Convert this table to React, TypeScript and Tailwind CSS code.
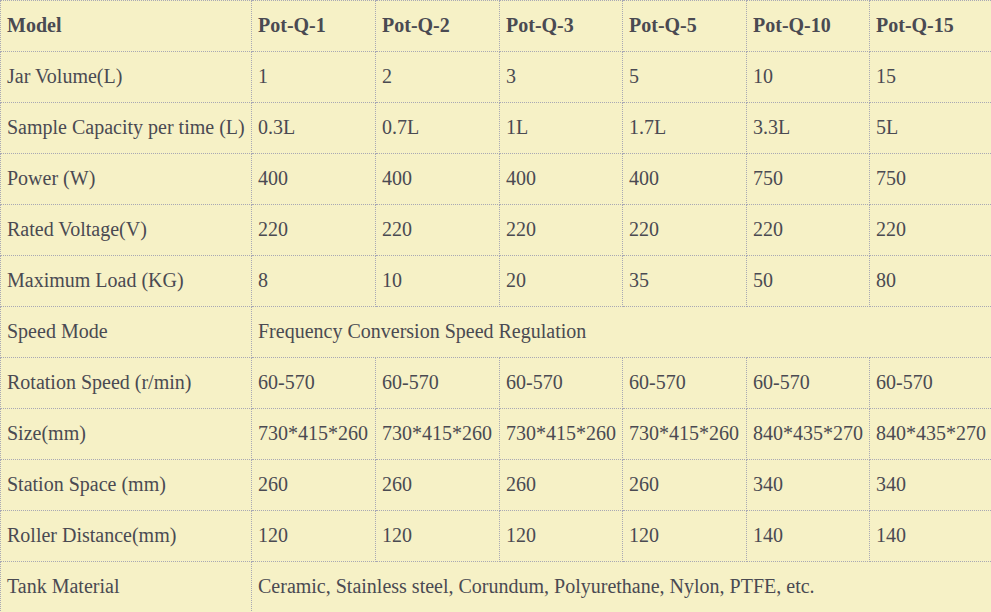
const models = ["Pot-Q-1", "Pot-Q-2", "Pot-Q-3", "Pot-Q-5", "Pot-Q-10", "Pot-Q-15"];

const rows: { label: string; values: string[]; span?: boolean }[] = [
  { label: "Jar Volume(L)", values: ["1", "2", "3", "5", "10", "15"] },
  { label: "Sample Capacity per time (L)", values: ["0.3L", "0.7L", "1L", "1.7L", "3.3L", "5L"] },
  { label: "Power (W)", values: ["400", "400", "400", "400", "750", "750"] },
  { label: "Rated Voltage(V)", values: ["220", "220", "220", "220", "220", "220"] },
  { label: "Maximum Load (KG)", values: ["8", "10", "20", "35", "50", "80"] },
  { label: "Speed Mode", values: ["Frequency Conversion Speed Regulation"], span: true },
  { label: "Rotation Speed (r/min)", values: ["60-570", "60-570", "60-570", "60-570", "60-570", "60-570"] },
  { label: "Size(mm)", values: ["730*415*260", "730*415*260", "730*415*260", "730*415*260", "840*435*270", "840*435*270"] },
  { label: "Station Space (mm)", values: ["260", "260", "260", "260", "340", "340"] },
  { label: "Roller Distance(mm)", values: ["120", "120", "120", "120", "140", "140"] },
  { label: "Tank Material", values: ["Ceramic, Stainless steel, Corundum, Polyurethane, Nylon, PTFE, etc."], span: true },
];

const cell = "border border-dotted border-[#a8a8b4] px-[6px] pt-0 pb-[2px] h-[51px] align-middle whitespace-nowrap";

export default function App() {
  return (
    <div className="w-[991px] h-[612px] overflow-hidden bg-[#f6f1c6]">
      <table
        className="border-collapse text-[20px] text-[#4a4a52] w-[992px] table-fixed"
        style={{ fontFamily: '"Liberation Serif", "Times New Roman", serif' }}
      >
        <colgroup>
          <col className="w-[251px]" />
          <col className="w-[124px]" />
          <col className="w-[124px]" />
          <col className="w-[123px]" />
          <col className="w-[124px]" />
          <col className="w-[123px]" />
          <col className="w-[123px]" />
        </colgroup>
        <thead>
          <tr>
            <th className={`${cell} text-left font-bold`}>Model</th>
            {models.map((m) => (
              <th key={m} className={`${cell} text-left font-bold`}>{m}</th>
            ))}
          </tr>
        </thead>
        <tbody>
          {rows.map((r) => (
            <tr key={r.label}>
              <td className={cell}>{r.label}</td>
              {r.span ? (
                <td className={cell} colSpan={6}>{r.values[0]}</td>
              ) : (
                r.values.map((v, i) => (
                  <td key={i} className={cell}>{v}</td>
                ))
              )}
            </tr>
          ))}
        </tbody>
      </table>
    </div>
  );
}
